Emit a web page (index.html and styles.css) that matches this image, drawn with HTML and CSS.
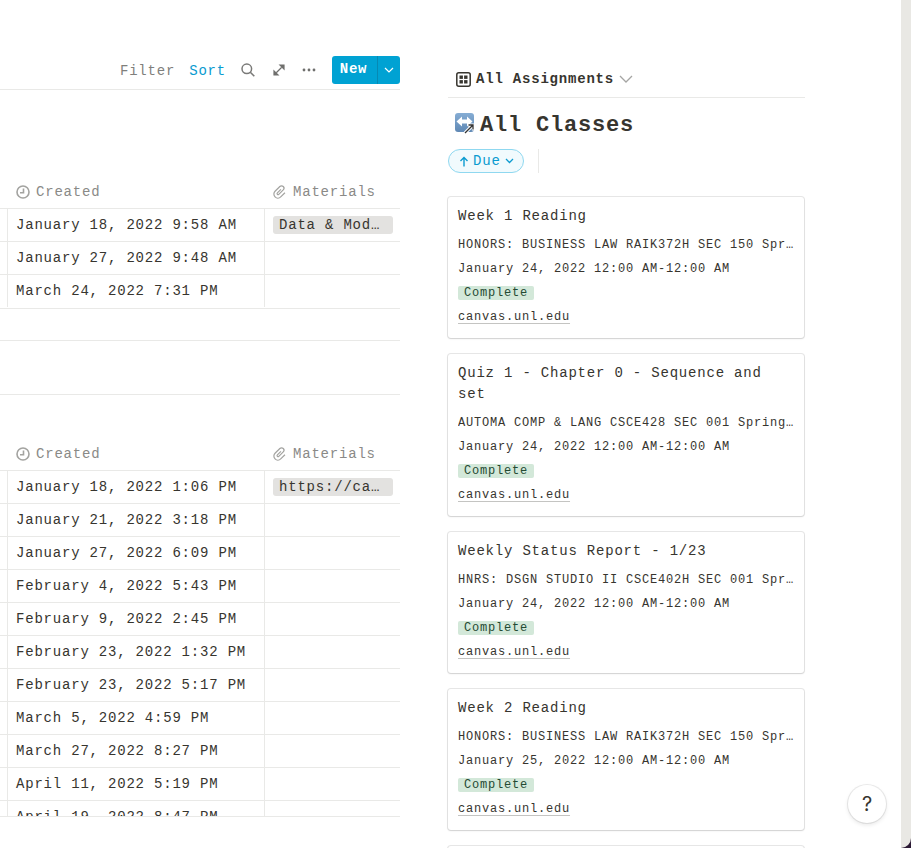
FILE: index.html
```html
<!DOCTYPE html>
<html lang="en">
<head>
<meta charset="utf-8">
<title>All Assignments</title>
<link rel="stylesheet" href="styles.css">
</head>
<body>
<div class="page">
  <main class="content">
    <section class="left">
      <div class="toolbar">
        <span class="tool">Filter</span>
        <span class="tool active">Sort</span>
        <svg class="ic-search" width="16" height="16" viewBox="0 0 16 16"><circle cx="6.800" cy="6.800" r="4.800" fill="none" stroke="#7a7a78" stroke-width="1.500"/><path d="M10.300 10.300 14.300 14.300" stroke="#7a7a78" stroke-width="1.600"/></svg>
        <svg class="ic-expand" width="12" height="12" viewBox="0 0 12 12"><path d="M7 1h4v4zM1 7v4h4zM3.500 8.500l5-5" fill="#6f6f6d" stroke="#6f6f6d" stroke-width="1.200"/></svg>
        <svg class="ic-more" width="14" height="4" viewBox="0 0 14 4"><circle cx="2" cy="2" r="1.400" fill="#6f6f6d"/><circle cx="7" cy="2" r="1.400" fill="#6f6f6d"/><circle cx="12" cy="2" r="1.400" fill="#6f6f6d"/></svg>
        <div class="new-btn">
          <span class="new-label">New</span>
          <span class="new-arrow"><svg width="10" height="6" viewBox="0 0 10 6"><path d="M1 1l4 4 4-4" fill="none" stroke="#fff" stroke-width="1.200"/></svg></span>
        </div>
      </div>

      <div class="table first">
        <div class="row head">
          <div class="stub"></div>
          <div class="cell date"><svg class="ic" width="14" height="14" viewBox="0 0 14 14"><circle cx="7" cy="7" r="6" fill="none" stroke="#a3a3a0" stroke-width="1.600"/><path d="M7.500 3.500V7.800H4" fill="none" stroke="#a3a3a0" stroke-width="1.600"/></svg>Created</div>
          <div class="cell mat"><svg class="ic" width="14" height="14" viewBox="0 0 14 14"><path transform="rotate(45 7 7)" d="M11 4v6a4 4 0 0 1-8 0V3.200a2.400 2.400 0 0 1 4.800 0V9.500a1 1 0 0 1-2 0V4.500" fill="none" stroke="#a3a3a0" stroke-width="1.200"/></svg>Materials</div>
        </div>
        <div class="row"><div class="stub"></div><div class="cell date">January 18, 2022 9:58 AM</div><div class="cell mat"><span class="chip">Data &amp; Models.pdf</span></div></div>
        <div class="row"><div class="stub"></div><div class="cell date">January 27, 2022 9:48 AM</div><div class="cell mat"></div></div>
        <div class="row"><div class="stub"></div><div class="cell date">March 24, 2022 7:31 PM</div><div class="cell mat"></div></div>
      </div>
      <div class="band one"></div>
      <div class="band two"></div>

      <div class="table second">
        <div class="row head">
          <div class="stub"></div>
          <div class="cell date"><svg class="ic" width="14" height="14" viewBox="0 0 14 14"><circle cx="7" cy="7" r="6" fill="none" stroke="#a3a3a0" stroke-width="1.600"/><path d="M7.500 3.500V7.800H4" fill="none" stroke="#a3a3a0" stroke-width="1.600"/></svg>Created</div>
          <div class="cell mat"><svg class="ic" width="14" height="14" viewBox="0 0 14 14"><path transform="rotate(45 7 7)" d="M11 4v6a4 4 0 0 1-8 0V3.200a2.400 2.400 0 0 1 4.800 0V9.500a1 1 0 0 1-2 0V4.500" fill="none" stroke="#a3a3a0" stroke-width="1.200"/></svg>Materials</div>
        </div>
        <div class="row"><div class="stub"></div><div class="cell date">January 18, 2022 1:06 PM</div><div class="cell mat"><span class="chip">https://canvas.unl.edu</span></div></div>
        <div class="row"><div class="stub"></div><div class="cell date">January 21, 2022 3:18 PM</div><div class="cell mat"></div></div>
        <div class="row"><div class="stub"></div><div class="cell date">January 27, 2022 6:09 PM</div><div class="cell mat"></div></div>
        <div class="row"><div class="stub"></div><div class="cell date">February 4, 2022 5:43 PM</div><div class="cell mat"></div></div>
        <div class="row"><div class="stub"></div><div class="cell date">February 9, 2022 2:45 PM</div><div class="cell mat"></div></div>
        <div class="row"><div class="stub"></div><div class="cell date">February 23, 2022 1:32 PM</div><div class="cell mat"></div></div>
        <div class="row"><div class="stub"></div><div class="cell date">February 23, 2022 5:17 PM</div><div class="cell mat"></div></div>
        <div class="row"><div class="stub"></div><div class="cell date">March 5, 2022 4:59 PM</div><div class="cell mat"></div></div>
        <div class="row"><div class="stub"></div><div class="cell date">March 27, 2022 8:27 PM</div><div class="cell mat"></div></div>
        <div class="row"><div class="stub"></div><div class="cell date">April 11, 2022 5:19 PM</div><div class="cell mat"></div></div>
        <div class="row"><div class="stub"></div><div class="cell date">April 19, 2022 8:47 PM</div><div class="cell mat"></div></div>
      </div>
    </section>

    <section class="right">
      <div class="view-tab">
        <svg class="ic-grid" width="15" height="15" viewBox="0 0 15 15"><rect x=".8" y=".8" width="13.400" height="13.400" rx="2" fill="none" stroke="#37352f" stroke-width="1.500"/><rect x="3.500" y="3.500" width="3.400" height="3.400" fill="#37352f"/><rect x="8.100" y="3.500" width="3.400" height="3.400" fill="#37352f"/><rect x="3.500" y="8.100" width="3.400" height="3.400" fill="#37352f"/><rect x="8.100" y="8.100" width="3.400" height="3.400" fill="#37352f"/></svg>
        <span class="view-name">All Assignments</span>
        <svg width="14" height="8" viewBox="0 0 14 8"><path d="M1 1l6 6 6-6" fill="none" stroke="#a5a5a3" stroke-width="1.300"/></svg>
      </div>
      <h1 class="title">
        <svg class="emoji" width="22" height="22" viewBox="0 0 22 22"><defs><linearGradient id="emojiFill" x1="0" y1="0" x2="0" y2="1"><stop offset="0" stop-color="#86add4"/><stop offset="1" stop-color="#5f88b4"/></linearGradient></defs><rect x="1" y="1" width="19" height="19" rx="3" fill="url(#emojiFill)"/><path d="M2.500 9.500 8 4.500v3h5v-3l5.500 5-5.500 5v-3H8v3z" fill="#fff"/><path d="M11 21l8-8M14 13h5.500v5.500" fill="none" stroke="#fff" stroke-width="3.200"/><path d="M11 21l8-8M14.500 13h4.500v4.500" fill="none" stroke="#333" stroke-width="1.300"/></svg>
        <span>All Classes</span>
      </h1>
      <div class="sort-row">
        <div class="pill">
          <svg width="10" height="11" viewBox="0 0 10 11"><path d="M5 10.500V1.500M1.500 5 5 1.500 8.500 5" fill="none" stroke="#0b9bd0" stroke-width="1.400"/></svg>
          <span>Due</span>
          <svg width="9" height="6" viewBox="0 0 9 6"><path d="M1 1l3.500 3.500L8 1" fill="none" stroke="#0b9bd0" stroke-width="1.300"/></svg>
        </div>
        <div class="divider"></div>
      </div>
      <div class="cards">
        <article class="card">
          <div class="card-title">Week 1 Reading</div>
          <div class="line">HONORS: BUSINESS LAW RAIK372H SEC 150 Spring 2022</div>
          <div class="line">January 24, 2022 12:00 AM-12:00 AM</div>
          <div class="line"><span class="tag">Complete</span></div>
          <div class="line"><span class="link">canvas.unl.edu</span></div>
        </article>
        <article class="card">
          <div class="card-title">Quiz 1 - Chapter 0 - Sequence and set</div>
          <div class="line">AUTOMA COMP &amp; LANG CSCE428 SEC 001 Spring 2022</div>
          <div class="line">January 24, 2022 12:00 AM-12:00 AM</div>
          <div class="line"><span class="tag">Complete</span></div>
          <div class="line"><span class="link">canvas.unl.edu</span></div>
        </article>
        <article class="card">
          <div class="card-title">Weekly Status Report - 1/23</div>
          <div class="line">HNRS: DSGN STUDIO II CSCE402H SEC 001 Spring 2022</div>
          <div class="line">January 24, 2022 12:00 AM-12:00 AM</div>
          <div class="line"><span class="tag">Complete</span></div>
          <div class="line"><span class="link">canvas.unl.edu</span></div>
        </article>
        <article class="card">
          <div class="card-title">Week 2 Reading</div>
          <div class="line">HONORS: BUSINESS LAW RAIK372H SEC 150 Spring 2022</div>
          <div class="line">January 25, 2022 12:00 AM-12:00 AM</div>
          <div class="line"><span class="tag">Complete</span></div>
          <div class="line"><span class="link">canvas.unl.edu</span></div>
        </article>
        <article class="card stub-card"></article>
      </div>
    </section>
  </main>
  <aside class="strip"><div class="strip-inner"></div></aside>
  <div class="help">?</div>
</div>
</body>
</html>
```
FILE: styles.css
```css
* { box-sizing: border-box; }
html, body { margin: 0; height: 100%; }
body {
  background: #fff;
  color: #37352f;
  font-family: "Liberation Mono", "DejaVu Sans Mono", monospace;
  font-size: 14px;
  letter-spacing: 0.8px;
  overflow: hidden;
}
.page { position: relative; display: flex; width: 911px; height: 848px; overflow: hidden; }
.content { flex: 1; display: flex; gap: 47px; min-width: 0; height: 848px; overflow: hidden; }
.strip { width: 10px; flex: none; background: #2c1a35; }
.strip-inner { height: 100%; background: #e9e8e4; border-bottom-right-radius: 10px; }

.left { width: 400px; flex: none; height: 817px; overflow: hidden; border-bottom: 1px solid #e9e9e7; }
.toolbar {
  height: 90px;
  padding: 56px 0 5px;
  display: flex;
  justify-content: flex-end;
  align-items: center;
  border-bottom: 1px solid #e9e9e7;
}
.tool { color: #7f7f7c; margin: 2px 14px 0 0; }
.tool.active { color: #0b9bd0; }
.ic-search { margin-right: 17px; }
.ic-expand { margin-right: 17px; }
.ic-more { margin-right: 16px; }
.new-btn {
  width: 68px;
  height: 28px;
  display: flex;
  background: #00a2d3;
  border-radius: 3px;
  color: #fff;
  font-weight: 700;
}
.new-label { width: 46px; padding-right: 2px; line-height: 27px; text-align: center; border-right: 1px solid #0689b3; }
.new-arrow { flex: 1; display: flex; align-items: center; justify-content: center; }

.row { display: flex; height: 33px; border-bottom: 1px solid #e9e9e7; }
.row.head { color: #8a8a87; }
.stub { width: 8px; flex: none; border-right: 1px solid #e9e9e7; }
.row.head .stub, .row.head .cell { border-right-color: transparent; }
.cell { display: flex; align-items: center; padding-left: 8px; white-space: nowrap; overflow: hidden; }
.cell.date { width: 257px; flex: none; border-right: 1px solid #e9e9e7; }
.cell.mat { flex: 1; min-width: 0; }
.ic { flex: none; margin-right: 6px; }
.first { padding-top: 86px; border-bottom: 1px solid #e9e9e7; }
.first .row:last-child { border-bottom-color: transparent; }
.band { border-bottom: 1px solid #e9e9e7; }
.band.one { height: 32px; }
.band.two { height: 54px; }
.second { padding-top: 43px; }
.chip {
  display: block;
  width: 120px;
  height: 18px;
  line-height: 18px;
  padding: 0 6px;
  background: #e3e2e0;
  border-radius: 3px;
  color: #37352f;
  overflow: hidden;
  white-space: nowrap;
  text-overflow: ellipsis;
}

.right { width: 358px; flex: none; display: flex; flex-direction: column; }
.right > * { flex: none; }
.view-tab {
  height: 42px;
  margin-top: 56px;
  margin-left: 1px;
  padding: 5px 0 0 8px;
  display: flex;
  align-items: center;
  gap: 5px;
  border-bottom: 1px solid #e9e9e7;
}
.view-name { font-weight: 700; }
.ic-grid { flex: none; }
.title {
  display: flex;
  align-items: center;
  margin: 0;
  padding: 9px 0 0 7px;
  height: 47px;
  font-size: 22px;
  line-height: 26px;
  font-weight: 700;
}
.emoji { flex: none; margin: -7px 4px 0 0; }
.sort-row { display: flex; align-items: center; height: 24px; margin: 4px 0 0 1px; }
.pill {
  display: flex;
  align-items: center;
  gap: 4px;
  height: 24px;
  width: 76px;
  padding: 0 7px 0 10px;
  color: #0b9bd0;
  background: #f1fafd;
  border: 1px solid #8fd8f0;
  border-radius: 12px;
}
.divider { width: 1px; height: 24px; margin-left: 14px; background: #e9e9e7; }
.cards { display: flex; flex-direction: column; gap: 16px; margin-top: 24px; }
.card {
  border-radius: 3px;
  padding: 9px 10px 9px;
  box-shadow: 0 0 0 1px rgba(15,15,15,.1), 0 1px 2px rgba(15,15,15,.1);
  margin: 0 1px;
  flex: none;
}
.card-title { line-height: 21px; margin-bottom: 6px; }
.line {
  font-size: 12px;
  line-height: 24px;
  height: 24px;
  white-space: nowrap;
  overflow: hidden;
  text-overflow: ellipsis;
}
.tag {
  display: inline-block;
  height: 14px;
  line-height: 14px;
  padding: 0 6px;
  background: #d3e8d9;
  border-radius: 2px;
  color: #244a33;
}
.link {
  text-decoration: underline;
  text-decoration-color: #c4c4c2;
  text-underline-offset: 3px;
}
.stub-card { height: 60px; }

.help {
  position: absolute;
  left: 848px;
  top: 785px;
  width: 38px;
  height: 38px;
  border-radius: 50%;
  background: #fff;
  box-shadow: 0 0 0 1px rgba(15,15,15,.08), 0 2px 4px rgba(15,15,15,.1);
  display: flex;
  align-items: center;
  justify-content: center;
  font-family: "Inter", "Liberation Sans", sans-serif;
  font-size: 20px;
  letter-spacing: 0;
  color: #37352f;
}
```
